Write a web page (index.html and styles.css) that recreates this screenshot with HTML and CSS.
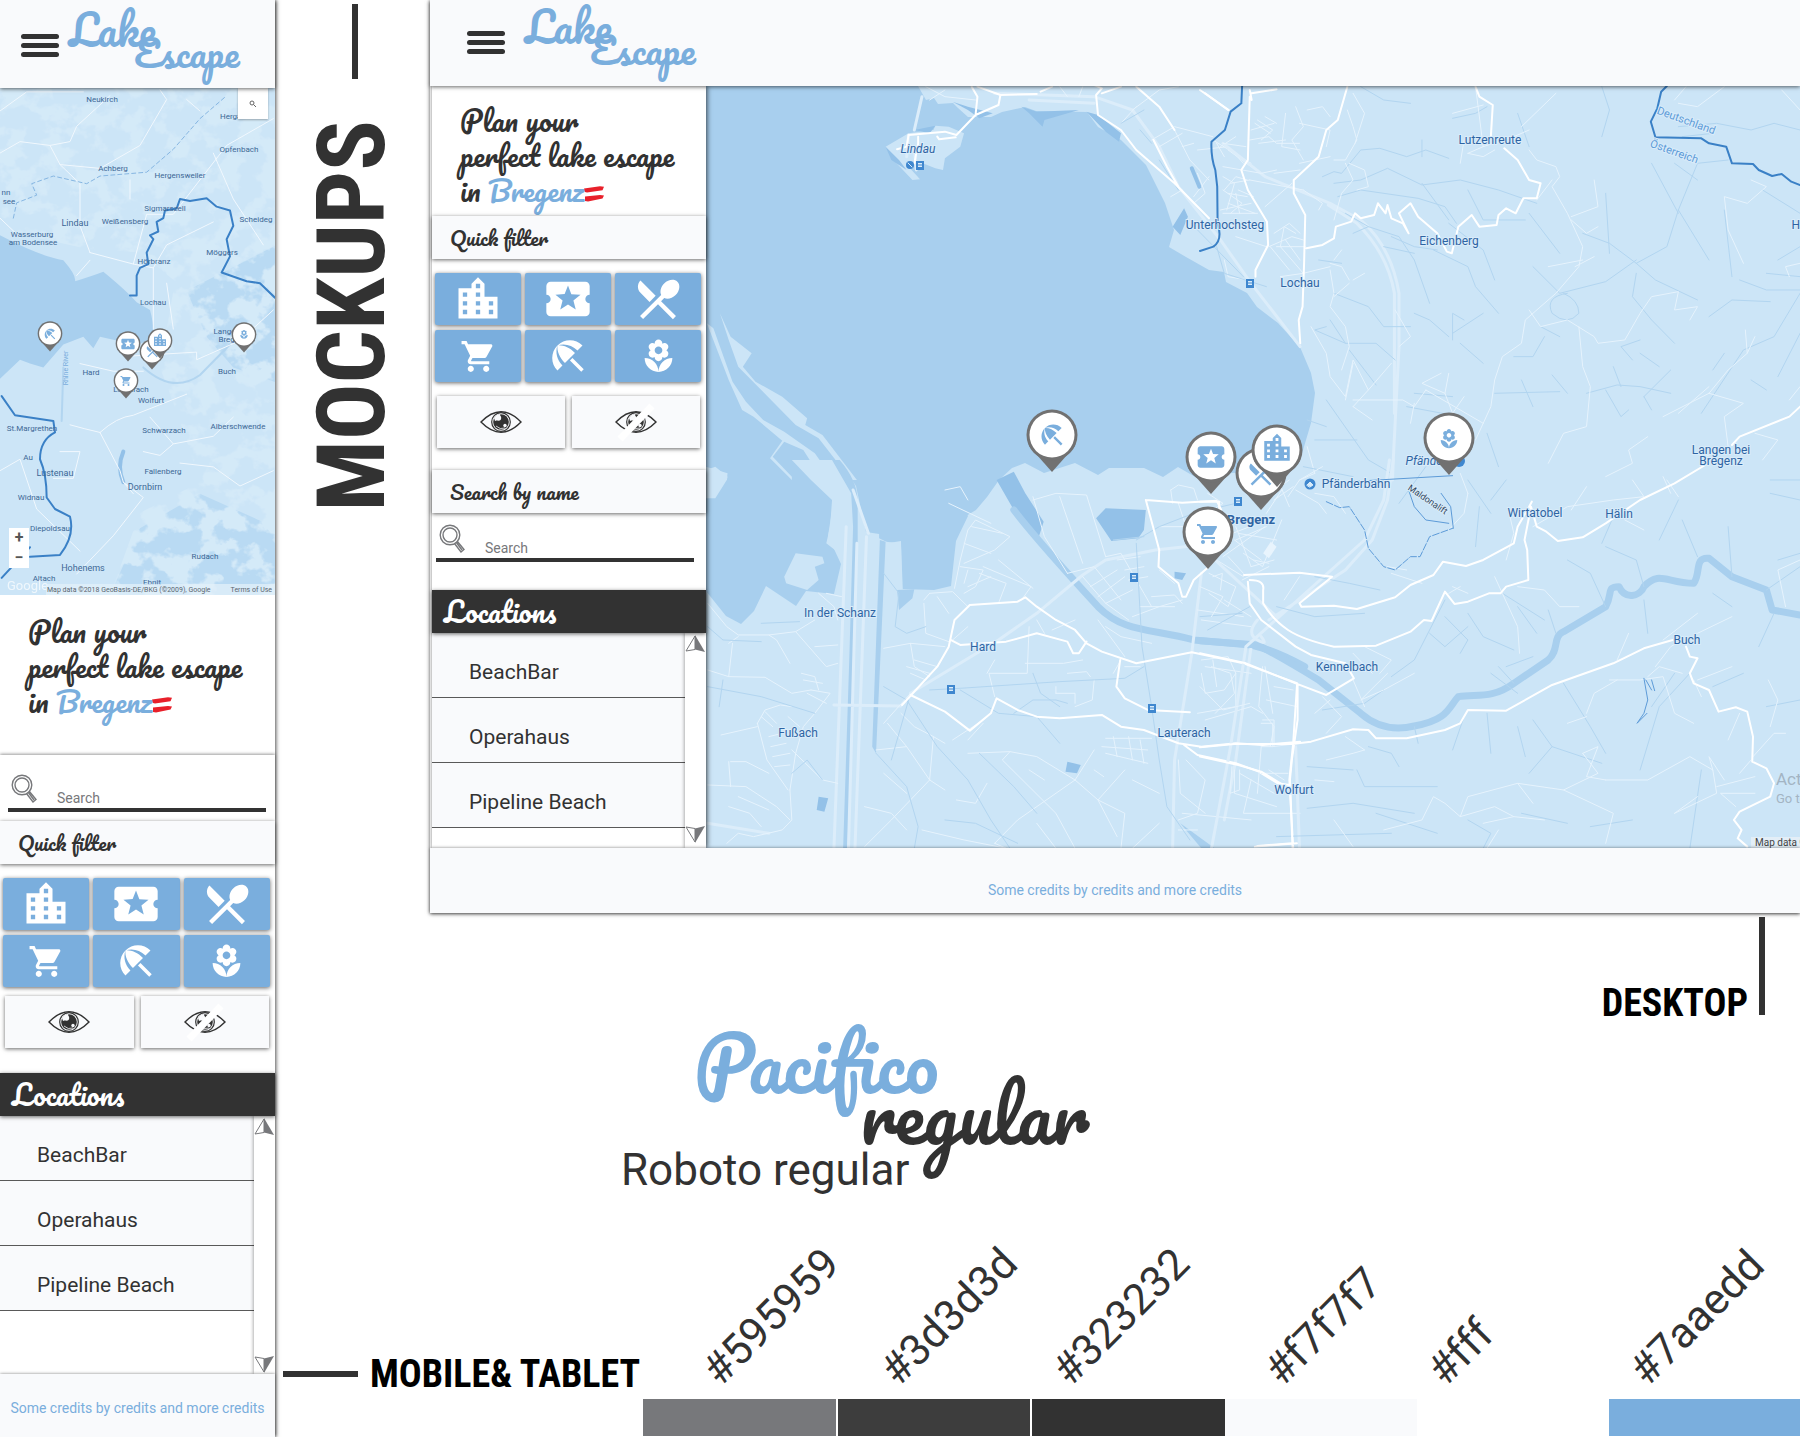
FILE: index.html
```html
<!DOCTYPE html>
<html lang="en">
<head>
<meta charset="utf-8">
<meta name="viewport" content="width=device-width, initial-scale=1">
<title>Lake Escape – Mockups</title>
<link rel="stylesheet" href="styles.css">
</head>
<body>
<svg class="sprite" aria-hidden="true">
  <symbol id="city" viewBox="0 0 24 24"><path d="M15 11V5l-3-3-3 3v2H3v14h18V11h-6zm-8 8H5v-2h2v2zm0-4H5v-2h2v2zm0-4H5V9h2v2zm6 8h-2v-2h2v2zm0-4h-2v-2h2v2zm0-4h-2V9h2v2zm0-4h-2V5h2v2zm6 12h-2v-2h2v2zm0-4h-2v-2h2v2z"/></symbol>
  <symbol id="ticket" viewBox="0 0 24 24"><path d="M20 12c0-1.1.9-2 2-2V6c0-1.1-.9-2-2-2H4c-1.1 0-1.99.9-1.99 2v4c1.1 0 1.99.9 1.99 2s-.89 2-2 2v4c0 1.1.9 2 2 2h16c1.1 0 2-.9 2-2v-4c-1.1 0-2-.9-2-2zm-4.42 4.8L12 14.5l-3.58 2.3 1.08-4.12-3.29-2.69 4.24-.25L12 5.8l1.54 3.95 4.24.25-3.29 2.69 1.09 4.11z"/></symbol>
  <symbol id="dining" viewBox="0 0 24 24"><path d="M8.1 13.34l2.83-2.83L3.91 3.5c-1.56 1.56-1.56 4.09 0 5.66l4.19 4.18zm6.78-1.81c1.53.71 3.68.21 5.27-1.38 1.91-1.91 2.28-4.65.81-6.12-1.46-1.46-4.2-1.1-6.12.81-1.59 1.59-2.09 3.74-1.38 5.27L3.7 19.87l1.41 1.41L12 14.41l6.88 6.88 1.41-1.41L13.41 13l1.47-1.47z"/></symbol>
  <symbol id="cart" viewBox="0 0 24 24"><path d="M7 18c-1.1 0-1.99.9-1.99 2S5.9 22 7 22s2-.9 2-2-.9-2-2-2zM1 2v2h2l3.6 7.59-1.35 2.45c-.16.28-.25.61-.25.96 0 1.1.9 2 2 2h12v-2H7.42c-.14 0-.25-.11-.25-.25l.03-.12.9-1.63h7.45c.75 0 1.41-.41 1.75-1.03l3.58-6.49c.08-.14.12-.31.12-.48 0-.55-.45-1-1-1H5.21l-.94-2H1zm16 16c-1.1 0-1.99.9-1.99 2s.89 2 1.99 2 2-.9 2-2-.9-2-2-2z"/></symbol>
  <symbol id="beach" viewBox="0 0 24 24"><path d="M13.127 14.56l1.43-1.43 6.44 6.443L19.57 21zm4.293-5.73l2.86-2.86c-3.95-3.95-10.35-3.96-14.3-.02 3.93-1.3 8.31-.25 11.44 2.88zM5.95 5.98c-3.94 3.95-3.93 10.35.02 14.3l2.86-2.86C5.7 14.29 4.65 9.91 5.95 5.98zm.02-.02l-.01.01c-.38 3.01 1.17 6.88 4.3 10.02l5.73-5.73c-3.13-3.13-7.01-4.68-10.02-4.3z"/></symbol>
  <symbol id="flower" viewBox="0 0 24 24"><path d="M12 22c4.97 0 9-4.03 9-9-4.97 0-9 4.03-9 9zM5.6 10.25c0 1.38 1.12 2.5 2.5 2.5.53 0 1.01-.16 1.42-.44l-.02.19c0 1.38 1.12 2.5 2.5 2.5s2.5-1.12 2.5-2.5l-.02-.19c.4.28.89.44 1.42.44 1.38 0 2.5-1.12 2.5-2.5 0-1-.59-1.85-1.43-2.25.84-.4 1.43-1.25 1.43-2.25 0-1.38-1.12-2.5-2.5-2.5-.53 0-1.01.16-1.42.44l.02-.19C14.5 2.12 13.38 1 12 1S9.5 2.12 9.5 3.5l.02.19c-.4-.28-.89-.44-1.42-.44-1.38 0-2.5 1.12-2.5 2.5 0 1 .59 1.85 1.43 2.25-.84.4-1.43 1.25-1.43 2.25zM12 5.5c1.38 0 2.5 1.12 2.5 2.5s-1.12 2.5-2.5 2.5S9.5 9.38 9.5 8s1.12-2.5 2.5-2.5zM3 13c0 4.97 4.03 9 9 9 0-4.97-4.03-9-9-9z"/></symbol>
  <symbol id="eye" viewBox="0 0 42 22">
    <path d="M1 11Q21-9.500 41 11Q21 31.500 1 11z" fill="none" stroke="#323232" stroke-width="1.400"/>
    <circle cx="21" cy="11" r="9.300" fill="none" stroke="#323232" stroke-width="1.200"/>
    <circle cx="21" cy="11" r="7.800" fill="#323232"/>
    <path d="M14 7a8 8 0 0 1 6-4c1 3-1 6-5 7z" fill="#f9fafc"/>
    <circle cx="18.500" cy="7" r="2.700" fill="#f9fafc"/><circle cx="25" cy="14.500" r="1.700" fill="#f9fafc"/>
    <path d="M16 15q4 4 9 2" fill="none" stroke="#f9fafc" stroke-width=".8"/>
  </symbol>
  <symbol id="lens" viewBox="0 0 26 29"><g fill="none" stroke="#77787b" stroke-width="1.400"><circle cx="11" cy="11" r="9.800"/><circle cx="11" cy="11" r="7"/><path d="M15.500 19.500l6.500 8.500 3-2.500-6.800-8.300M17 18l6 8"/></g></symbol>
  <symbol id="flag" viewBox="0 0 22 16"><path d="M0 2.500L16 .3l4 .5-1.500 3.500L3 6.500 1 6z M1 10.500L16 9l4 .5-1.500 3L4 15.500 1 15z" fill="#e8202a"/></symbol>
  <symbol id="arrow" viewBox="0 0 20 17"><path d="M10 1L1 16l9-1.500z" fill="#fff" stroke="#77787b"/><path d="M10 0L20 17l-10-2.500z" fill="#77787b"/></symbol>
  <symbol id="pin" viewBox="-26 -26 52 64"><path d="M-23 11L0 37L23 11z" fill="#717171"/><circle r="25.500" fill="#717171"/><circle r="22.500" fill="#fff"/></symbol>
  <symbol id="stop" viewBox="0 0 8 9"><path d="M0 0h8v9H0z" fill="#3f87cf"/><path d="M2 2h4v1.500H2zM2 4.500h4v1.500H2z" fill="#d9ecfa"/></symbol>
</svg>

<div class="board">
  <section class="phone" aria-label="Mobile and tablet mockup">
    <header class="top">
      <button class="burger" type="button" aria-label="Menu"><i></i><i></i><i></i></button>
      <a class="logo" href="#"><span>Lake</span><span class="logo-sub">Escape</span></a>
    </header>
    <div class="map">
      <svg class="map-art" viewBox="0 0 275 507" role="img" aria-label="Map around Bregenz">
        <defs>
          <filter id="hills" x="0" y="0" width="100%" height="100%">
            <feTurbulence type="fractalNoise" baseFrequency=".014 .018" numOctaves="4" seed="7"/>
            <feColorMatrix values="0 0 0 0 .66  0 0 0 0 .82  0 0 0 0 .94  9 0 0 0 -4.200"/>
            <feComposite in2="SourceGraphic" operator="in"/>
          </filter>
        </defs>
        <rect width="275" height="507" fill="#cce5f7"/>
        <g transform="translate(0 -88) scale(.3333 .3827)">
          <path d="M560 760L830 640V1000L700 960 620 880zM420 1380L600 1290 830 1380V1555H330z" fill="#b9daf3"/>
          <g filter="url(#hills)"><path d="M0 225H825V860L560 760 420 660 260 650 0 600z"/><path d="M520 760L830 620V1555H330L420 1340 600 1260 540 1100 480 960z"/></g>
          <path d="M0 615Q120 670 190 680Q230 720 225 735Q280 720 310 710Q380 760 410 790L450 810Q460 840 462 880L430 895 395 905 350 890 300 880 280 910 250 880 190 900 130 960 90 950 60 940 0 990z" class="water"/>
          <path d="M430 960Q520 1030 600 980L690 900M190 960L185 1100" class="stream wide"/>
          <path d="M370 1180Q350 1220 370 1260" class="stream wider"/>
          <path d="M0 400L60 370 150 380 210 370 230 330 330 250M150 380L180 430 240 480 240 590 270 660M180 430L300 440 420 380 500 260 480 235M390 470V520M270 660L400 690 440 560 520 560 680 380 820 310M270 680L230 720M400 690L460 700 500 640 640 580M460 700L460 860M500 740L520 860M350 900L400 930 590 920 590 940 720 890 820 810M240 950L340 970 430 970M300 1130Q350 1090 400 1085L560 1030M300 1130L360 1230 370 1260 400 1290M450 1090L520 1160 640 1140 700 1090M430 1180L480 1190 520 1160M540 1210L640 1220 720 1270 820 1230M180 1180L240 1180 220 1250 160 1250M0 570L60 620M0 1230L60 1200 110 1330 240 1440M370 1260L430 1300 340 1400 230 1500M0 290L80 240 250 240M560 260L600 290M640 400L700 520 790 640M210 1110Q250 1120 300 1130" class="road"/>
          <path d="M40 570L50 530 110 510 95 480 160 460 260 480 300 460 440 450 520 390 600 310 680 250" class="dash"/>
          <path d="M390 772H410V720L420 700 445 690 440 660 460 625 450 615 475 605 470 580 490 570 495 550 530 545 540 520 570 525 620 518 650 540 690 550 700 590 680 625 690 670 665 712 740 735 780 740 825 778M5 1035L45 1085 160 1100 165 1130Q120 1150 120 1200 140 1240 140 1300L165 1330 210 1350Q225 1400 180 1450L90 1455M5 1510L90 1430" class="border"/>
        </g>
        <g class="places">
          <text x="102" y="14">Neukirch</text><text x="239" y="64">Opfenbach</text><text x="113" y="83">Achberg</text><text x="180" y="90">Hergensweiler</text><text x="6" y="107">nn</text><text x="9" y="116">see</text><text x="165" y="123">Sigmarszell</text><text x="75" y="138" class="town">Lindau</text><text x="125" y="136">Weißensberg</text><text x="256" y="134">Scheideg</text><text x="32" y="149">Wasserburg</text><text x="33" y="157">am Bodensee</text><text x="222" y="167">Möggers</text><text x="154" y="176">Hörbranz</text><text x="153" y="217">Lochau</text><text x="233" y="246">Langen bei</text><text x="233" y="254">Bregenz</text><text x="91" y="287">Hard</text><text x="227" y="286">Buch</text><text x="131" y="304">Lauterach</text><text x="151" y="315">Wolfurt</text><text x="32" y="343">St.Margrethen</text><text x="164" y="345">Schwarzach</text><text x="238" y="341">Alberschwende</text><text x="28" y="372">Au</text><text x="55" y="388" class="town">Lustenau</text><text x="163" y="386">Fallenberg</text><text x="145" y="402" class="town">Dornbirn</text><text x="31" y="412">Widnau</text><text x="50" y="443">Diepoldsau</text><text x="205" y="471">Rudach</text><text x="83" y="483" class="town">Hohenems</text><text x="44" y="493">Altach</text><text x="152" y="497">Ebnit</text><text x="234" y="31">Hergatz</text>
          <text transform="translate(68 280) rotate(-90)" class="river">Rhine River</text>
        </g>
        <text x="7" y="502" class="google">Google</text>
        <rect x="46" y="496" width="229" height="11" fill="#e3f0fa" opacity=".75"/>
        <text x="47" y="504" class="legal">Map data ©2018 GeoBasis-DE/BKG (©2009), Google</text><text x="272" y="504" text-anchor="end" class="legal">Terms of Use</text>
        <g fill="#7aaedd">
          <use href="#pin" x="37" y="233" width="26" height="31"/><use href="#beach" x="43" y="239" width="14" height="14"/>
          <use href="#pin" x="139" y="251" width="26" height="31"/><use href="#dining" x="145" y="256" width="15" height="15"/>
          <use href="#pin" x="115" y="243" width="26" height="31"/><use href="#ticket" x="120" y="248" width="16" height="16"/>
          <use href="#pin" x="147" y="240" width="26" height="31"/><use href="#city" x="152" y="244" width="16" height="16"/>
          <use href="#pin" x="231" y="234" width="26" height="31"/><use href="#flower" x="239" y="241" width="10" height="11"/>
          <use href="#pin" x="113" y="280" width="26" height="31"/><use href="#cart" x="120" y="287" width="12" height="12"/>
        </g>
      </svg>
      <button class="map-find" type="button" aria-label="Search map"><svg viewBox="0 0 8 8" width="8" height="8"><circle cx="3" cy="3" r="2" fill="none" stroke="#666"/><path d="M4.500 4.500L7 7" stroke="#666"/></svg></button>
      <div class="zoom"><button type="button" aria-label="Zoom in">+</button><button type="button" aria-label="Zoom out">−</button></div>
    </div>
    <p class="slogan">Plan your<br>perfect lake escape<br>in <em>Bregenz</em><svg class="flag"><use href="#flag"/></svg></p>
    <div class="find"><label class="find-row"><svg class="lens"><use href="#lens"/></svg><input type="search" placeholder="Search" aria-label="Search"></label></div>
    <h2 class="bar">Quick filter</h2>
    <div class="filters">
      <button type="button" aria-label="Sights"><svg class="i-lg"><use href="#city"/></svg></button>
      <button type="button" aria-label="Events"><svg class="i-lg"><use href="#ticket"/></svg></button>
      <button type="button" aria-label="Restaurants"><svg class="i-lg"><use href="#dining"/></svg></button>
      <button type="button" aria-label="Shopping"><svg class="i-sm"><use href="#cart"/></svg></button>
      <button type="button" aria-label="Beaches"><svg class="i-md"><use href="#beach"/></svg></button>
      <button type="button" aria-label="Nature"><svg class="i-sm"><use href="#flower"/></svg></button>
    </div>
    <div class="views">
      <button type="button" aria-label="Show all"><svg class="eye"><use href="#eye"/></svg></button>
      <button type="button" aria-label="Hide all" class="hide"><svg class="eye"><use href="#eye"/></svg></button>
    </div>
    <h2 class="bar bar-dark">Locations</h2>
    <div class="places-box">
      <ul><li><a href="#">BeachBar</a></li><li><a href="#">Operahaus</a></li><li><a href="#">Pipeline Beach</a></li></ul>
      <div class="scroll"><button type="button" aria-label="Scroll up"><svg><use href="#arrow"/></svg></button><button type="button" aria-label="Scroll down" class="down"><svg><use href="#arrow"/></svg></button></div>
    </div>
    <footer class="credits">Some credits by credits and more credits</footer>
  </section>

  <div class="heading"><i class="rule-v"></i><h1>MOCKUPS</h1></div>

  <section class="desktop" aria-label="Desktop mockup">
    <header class="top">
      <button class="burger" type="button" aria-label="Menu"><i></i><i></i><i></i></button>
      <a class="logo" href="#"><span>Lake</span><span class="logo-sub">Escape</span></a>
    </header>
    <div class="split">
      <aside class="side">
        <p class="slogan">Plan your<br>perfect lake escape<br>in <em>Bregenz</em><svg class="flag"><use href="#flag"/></svg></p>
        <h2 class="bar">Quick filter</h2>
        <div class="filters">
          <button type="button" aria-label="Sights"><svg class="i-lg"><use href="#city"/></svg></button>
          <button type="button" aria-label="Events"><svg class="i-lg"><use href="#ticket"/></svg></button>
          <button type="button" aria-label="Restaurants"><svg class="i-lg"><use href="#dining"/></svg></button>
          <button type="button" aria-label="Shopping"><svg class="i-sm"><use href="#cart"/></svg></button>
          <button type="button" aria-label="Beaches"><svg class="i-md"><use href="#beach"/></svg></button>
          <button type="button" aria-label="Nature"><svg class="i-sm"><use href="#flower"/></svg></button>
        </div>
        <div class="views">
          <button type="button" aria-label="Show all"><svg class="eye"><use href="#eye"/></svg></button>
          <button type="button" aria-label="Hide all" class="hide"><svg class="eye"><use href="#eye"/></svg></button>
        </div>
        <h2 class="bar">Search by name</h2>
        <div class="find"><label class="find-row"><svg class="lens"><use href="#lens"/></svg><input type="search" placeholder="Search" aria-label="Search"></label></div>
        <h2 class="bar bar-dark">Locations</h2>
        <div class="places-box">
          <ul><li><a href="#">BeachBar</a></li><li><a href="#">Operahaus</a></li><li><a href="#">Pipeline Beach</a></li></ul>
          <div class="scroll"><button type="button" aria-label="Scroll up"><svg><use href="#arrow"/></svg></button><button type="button" aria-label="Scroll down" class="down"><svg><use href="#arrow"/></svg></button></div>
        </div>
      </aside>
      <div class="map">
        <svg class="map-art" viewBox="0 0 1094 762" role="img" aria-label="Map of Bregenz">
          <rect width="1094" height="762" fill="#cce5f7"/>
          <path class="water" d="M0 0H212L220 14 228 12 232 18 247 17 252 22 262 31 285 31 296 26 319 21 330 25 381 26 392 41 415 54 440 79 459 117 468 144 463 161 480 171 503 184 518 186 520 196 541 207 551 221 572 237 594 261 605 287 609 307 605 337 595 371 560 385 526 387 505 390 491 392 472 381 457 391 438 382 403 382 392 389 369 377 338 387 319 377 306 382 293 394 281 411 270 424 255 433 240 418 238 403 252 404 262 430 250 455 245 500 228 504 196 503 195 455 183 457 160 446 150 400 140 385 128 412 122 450 135 478 128 508 100 505 90 520 60 500 48 525 35 538 20 530 0 505z"/>
          <g transform="translate(-6 -6) scale(.3827 .3333)">
            <path class="land" d="M485 200L545 160 610 150 615 137 650 140 690 160 680 200 640 235 635 270 615 265 560 240 545 260 575 298 555 300 510 245z"/>
            <path class="land" d="M52 700L80 770 135 820 112 860 145 905 215 950 280 1015 275 1035 320 1065 410 1200H395L310 1075 250 1035 100 860 75 780z"/>
            <path class="land" d="M18 730L35 745 85 905 120 965 165 1020 220 1055 300 1120 350 1200 320 1200 270 1110 220 1085 190 1130 240 1190 240 1200 183 1135 215 1082 140 1010 110 990 75 900z"/>
            <path class="land" d="M16 1170L40 1160 72 1190 70 1200H16z"/>
            <path class="deep" d="M1010 95L1040 105 1100 160 1095 185 1060 155zM1265 385L1275 410 1255 465 1235 440zM840 80L880 95 990 90 900 120 895 140 860 100zM660 65L700 80 765 100 730 115 700 90zM485 200L520 240 540 270 500 240zM560 150L615 137 600 160z"/>
          </g>
          <g transform="translate(-6 374) scale(.3827 .3333)">
            <path class="land" d="M240 0H360L400 80 405 250 395 600 375 1165H340L370 560 375 290 330 250 340 200 345 120 290 60zM16 20L72 40 70 60 40 115 16 115z"/>
            <path class="land" d="M220 350L250 280 320 290 325 310 300 320 310 360 280 390 225 370z"/>
            <path class="land" d="M430 215L468 222 465 1165H400zM485 245L525 250 530 390 515 400 480 420 470 600 490 300z"/>
            <path class="water" d="M365 0Q410 60 412 120L412 250 400 700 385 1165H374L390 600 400 200 395 100 345 0zM470 240L485 245 475 500 460 880 450 860z"/>
            <path class="water" d="M515 390L560 388 555 415 520 450zM1255 1090L1345 1165H1310z"/>
            <path class="deep" d="M775 60L820 35 850 100 898 185 885 232 850 190 820 150zM1035 175L1060 145 1165 150 1160 210 1145 235 1075 243zM960 905L995 915 985 940 955 935zM310 1010L335 1015 325 1055 305 1050zM1240 335L1270 340 1260 360 1240 355z"/>
            <path class="stream river-w" d="M820 150C880 240 960 340 1040 440C1110 520 1180 505 1290 540L1440 555Q1500 570 1580 620"/>
            <path class="minor2" d="M400 90L440 220M382 200L350 1165M410 250L388 1165M435 230L405 1165M780 540L880 460 1000 345 1060 300 1190 270 1350 250M550 700L780 540M525 738L350 735M1310 340L1285 580 1240 900 1235 1165M20 1090L180 1120M1440 560L1400 900 1370 1080"/>
            <path class="minor" d="M20 430L70 500 100 525 180 525 250 515 300 480M180 525L200 540 235 610M250 515L330 620 360 610M85 550L75 650 20 630M75 650L170 652 240 700 290 690M75 550L100 530M300 560L360 555M290 690L340 700 300 760 270 800 250 880 235 990M240 870L320 960 360 970M150 790L175 900 230 990M150 790L170 750 210 735 240 740M160 770L190 800M170 755L200 790M180 830L215 820M185 860L225 850M190 890L235 880M195 920L235 915M80 905H120L180 940M75 905L80 980M20 975L120 980 200 1040 235 1080M235 990L240 1080 215 1110 140 1130 100 1120 70 1150M75 1040L130 1060 160 1100M100 1010L180 1050M55 825L150 800M265 640L300 650 310 690M270 660L320 670M280 700L330 730M230 770L260 800M310 400L350 440 360 480M320 440L350 470M330 400L370 410"/>
            <path class="minor" d="M480 565L550 550 640 560M550 550L560 620 600 650M540 620L600 640M560 600L620 620M550 640L590 660M480 790L550 700M490 790L540 860 600 960 640 990M525 760L560 800 610 830 640 850M610 830L600 960M600 960L500 1080 430 1160M460 870L540 860M540 1000L480 940M660 840L740 780M700 880L810 875 880 890 980 960M810 875L790 900 930 1060 980 1165M980 960L1040 1020 1110 930M980 960L1030 870M980 960L830 1080 770 1150M1040 1020L1090 1130M740 790L700 840M670 1020L720 1030 750 970M860 930L900 960M1030 930L1055 950M580 1110L690 1140 800 1165M430 1040L500 1060 540 1110M860 500L855 640 755 640 770 710M850 610H950L1000 600M930 700H980V730M930 680V700M1030 660L1025 720 980 740M960 640L1010 635 1020 650M770 600L750 640M700 500L660 540M880 480L900 520M920 510L980 480M1060 500L1100 530 1180 550M1040 480L1110 590M1080 640L1100 600M1110 620H1150"/>
            <path class="minor" d="M665 385L680 300 700 210 720 180 810 230 770 270 690 310M690 250L760 280M710 200L790 220M680 320L740 330 720 380 690 400M700 330L690 370M730 340L800 370 780 430M740 320L865 380 840 420M700 380L760 350M780 300L870 385M600 400L660 395 700 440M585 420L600 400M585 430L590 520 650 545M620 410L650 460M640 90L680 80 700 120M650 130L760 190M870 110L900 230 960 340M870 120L930 100 1010 105 1060 290M940 110L1000 310M1060 290L1100 280 1160 400 1180 440M1000 350L1060 430 1120 480M960 340L1030 320 1100 420M1020 380L1090 330M1040 410L1110 350M1060 430L1130 390M1090 300L1150 290M1110 330L1160 320M1120 360L1170 350M1130 470L1200 440 1260 420M1180 410L1240 405 1260 430M1150 440L1240 440M1200 330L1240 370M1230 90L1250 75 1290 85 1300 120M1230 90L1235 130M1250 130L1270 200 1330 180M1200 200L1270 200 1290 240M1330 340L1400 380 1380 440 1330 400M1340 350L1365 340 1360 390M1370 420L1440 470M1300 450L1420 470M1310 480L1440 500M1400 200L1440 320M1400 240L1480 200M1420 280L1470 320 1520 180M1440 320L1500 300M1380 290L1420 340M1350 300L1420 350M1490 100L1540 60M1500 120L1550 80M1510 60L1540 140M1480 160L1520 90"/>
            <path class="minor" d="M1310 600L1380 590 1400 640 1370 690 1320 700 1310 640M1340 600L1350 680M1400 640L1400 740 1300 760M1320 780L1440 740 1470 760M1320 620L1440 640M1470 620L1460 740 1500 800 1490 860M1500 680L1550 690M1480 720L1560 740M1470 780H1500V860M1060 835H1180M1050 860L1170 870M1060 880L1170 910M1080 830L1090 890M1120 830L1130 900M1150 840L1160 910M1250 900L1255 1000 1320 1060M1270 900L1320 960 1300 1060 1250 1080M1390 920L1385 1000 1410 990V930M1410 940L1500 1000M1440 960L1420 1060 1568 1060M1260 1060L1440 1080M1130 960L1200 1000M1040 1020L1110 1060 1100 1165M770 1150L800 1165M880 1090L930 1165M1200 1090L1130 1165M1250 1110H1300"/>
            <path class="stream" d="M480 680L540 720 620 860 700 960 760 1080 810 1165M600 690L680 685 940 665 1110 655 1160 620M545 720L500 900M680 690L780 760 880 770 940 850M820 760L870 720 930 720 960 730M870 640L890 700 940 740M730 880L820 980 880 1060M1140 250L1155 560 1180 740 1200 900 1220 1040 1280 1140M1140 240L1200 200 1290 160 1400 130M460 880L540 980 570 1100 560 1165M20 680L160 710 300 760M60 660L50 740M20 500L60 540 160 545M160 490L260 485M480 340L520 400 510 500 540 520 590 500M640 1080L720 1090 830 1150M1080 240L1160 230M320 960L280 900 240 940"/>
            <path class="road main" d="M528 735L620 620 650 560 665 480 705 435 830 425 850 412 880 440 930 480 980 510 1010 550 1050 575 1140 610 1285 577 1420 610 1560 670M655 540L680 555 800 545 880 520 960 545 975 580 990 580 1010 545M550 705L640 755 705 812 760 760 775 715 830 750 880 770 940 775 1050 765 1100 800 1160 810 1250 850 1310 860 1400 850 1470 855 1568 845M1098 600L1088 680 1110 715 1170 750 1280 757M1265 855L1300 885 1400 910 1460 935 1510 970 1540 975M1560 675L1550 850 1540 960 1550 1165M1560 1150L1450 1160M1165 120L1200 270 1198 320 1250 370 1260 410 1270 410 1290 360 1325 325M1165 120L1260 128 1350 122 1362 150"/>
          </g>
          <g transform="translate(-6 -6) scale(.3827 .3333)">
            <path class="minor2" d="M1030 50L1130 90 1200 200 1250 320 1360 480 1440 610 1568 800M770 40L1030 50M860 60L1030 70"/>
            <path class="minor" d="M590 20L640 50 720 60M640 30L600 60M940 20L960 50M1000 20L990 50M1100 130L1140 80M1130 90L1200 30 1250 20M1180 180L1240 140 1340 170M1200 200L1260 160M1240 150L1280 240 1330 300M1260 200L1290 190M1300 210L1380 200 1420 250M1340 180L1440 250M1360 200L1400 170M1380 210L1440 260M1370 230L1350 190M1230 350L1260 330M1290 350L1330 290M1300 280L1320 340 1290 370M1360 390L1440 370M1370 330L1400 290 1430 300M1380 340L1430 350M1380 370L1450 400M1400 340L1410 400M1370 430L1420 450M1400 470L1480 500M1370 540L1380 590 1430 600M1440 150L1500 130M1450 130L1490 160M1460 190L1530 180M1530 100L1520 200 1568 210M1500 280L1568 270M1500 460L1540 430 1568 460M1530 480L1568 540M1490 500L1540 570"/>
            <path class="minor2" d="M580 50L560 150M545 165L540 230M560 200L565 270"/>
            <path class="stream" d="M1100 130L1160 90M1180 190L1150 150M1350 500L1370 580 1480 620M1300 450L1420 590M1250 330L1200 240"/>
            <path class="stream wider" d="M1285 265L1305 320"/>
            <path class="road main" d="M545 165L640 155 670 165 720 105 780 75 785 45 880 42M620 170L625 178 668 172M545 165L540 200 515 208M570 170V190L560 250M710 20L725 50 720 105M725 20L785 45M1030 15L1050 25 1035 45 1040 105 1100 150 1140 210 1240 310 1330 415M1185 180L1220 260 1250 320M1050 40L1100 20M1140 20L1200 80 1240 150M1320 40L1380 90M890 35L920 20"/>
          </g>
          <g transform="translate(494 -6) scale(.3827 .3333)">
            <path class="minor2" d="M60 190L170 290 340 370 420 420Q500 500 520 640L520 800 505 1140 503 1200M335 375L410 430Q490 520 508 640L508 1000"/>
            <path class="stream" d="M320 290L350 275 370 280 420 210 470 205 540 230 590 210 650 235M350 310L420 300 490 265 580 315 680 300 780 330 880 370M580 180V230M360 350L420 330 570 355 640 380 670 430M650 420L580 310M700 330L740 420 850 420M860 400L940 520M400 460L440 440 520 470 560 540 600 670M420 20L480 60 550 70M440 440L380 400M660 115L720 100 750 80M610 510L700 560 720 620 780 700M500 470L560 500 620 510M650 430L740 510 770 600M660 780V700L690 720M650 770L600 720 560 700M740 850L680 790M660 760L740 700M350 640L440 680 480 740 550 740M330 740L300 750 380 790 460 790 510 840M390 810L460 915M380 790L340 720M310 540L370 550M870 560L940 640 1060 605 1140 540M1140 550L1070 490 1000 460M1140 550L1190 600 1300 660M1140 550L1220 500 1250 390 1300 250 1380 240M1250 400L1180 250M1250 390L1330 540M1140 580L1130 650 1180 720 1240 790M1300 300L1240 250M1370 390L1390 590M1060 340L1070 520M1050 20L1070 90 1050 170M1250 140L1350 130 1440 150 1500 130 1568 150M1260 170L1340 160M1470 330L1568 400M1410 600L1480 630H1568M1330 710L1390 660 1490 665M1568 500L1510 540M1568 590L1480 580M1568 640L1500 770 1420 810 1310 1000M1150 780L1100 800 1130 840M1150 820L1200 860M960 640Q900 650 920 700 960 740 990 700 990 660 950 640M890 740L940 770M820 830L870 830 900 770M770 940L940 935M840 900L870 980M920 885L960 940M1010 940L1090 915 1150 920 1230 940M1160 950L1180 990M1060 930L1100 1010 1120 990M1160 950L1230 870M1100 920L1080 860M300 1080L410 1080M330 1040L280 1020M540 980L680 1010M560 940L660 950M330 960L440 1140 500 1180M750 1060L780 1160M1370 820L1340 870M1440 900L1480 930M1510 890L1568 760M560 520L480 500M830 100L860 200"/>
            <path class="minor" d="M250 80L270 140 240 180 270 240M260 130L340 150 330 200M280 90L320 80 340 110M385 90L400 140 410 180 380 240 350 240M400 40L430 100 405 190M390 250L430 270 440 320 410 330M380 250L400 300 370 340 350 420M130 180L180 170 200 190 260 190M150 120L190 150 160 180M170 110L200 130M120 200L60 190M60 260L160 280 200 270M60 330L110 370 80 400M100 330L140 350M80 310L130 300M60 290L90 310 70 390M60 400L150 400M130 300L270 330M170 380L240 310M260 250L340 230M210 500L270 580M180 500L240 470 270 480M210 500L220 440 250 460M200 500L275 500M210 590L270 580 340 560M340 550L370 560 390 600M350 540L370 510M400 600L430 580M340 570L350 640 340 680 380 740 390 800 370 870M390 610L350 650M290 740L330 820 340 890 380 950 400 840 440 930 400 980M440 930L500 850M400 850L380 960M270 330L320 370 310 390M400 960L530 960 560 980 590 930M650 880L640 940 580 910 630 880M640 940L660 1000 690 950M590 930L740 1030M560 970L550 1030M510 690L550 770 520 800M400 980L450 1020M720 20L740 200 700 220M690 180L680 250M700 220L740 230 770 210M860 150L820 170 740 200M660 100L740 75M860 210L880 240 930 260 940 290 920 320 960 400 1000 500 990 560 930 640 850 720 840 790 790 830 770 900 760 980 720 1080M880 360L920 300M970 410L1040 380 1030 300M970 420L1010 460 1040 440M1000 540L910 560M1030 530L980 560M860 690L890 740 960 720 1030 770 1040 790 1110 780 1150 700 1180 650 1250 635 1240 690 1300 680 1280 720M990 740L1000 860 1020 920 1010 1040 950 1060 910 1150M1420 550L1380 450 1370 350 1430 370 1480 320 1440 300M1250 70L1300 80 1370 20M1240 60L1270 20M1520 30L1568 90M1540 590L1530 560 1568 550M1425 750L1430 820 1380 870 1330 940 1210 1010M1450 770L1430 820M1330 940L1420 970 1370 1010 1380 1100 1320 1130M1330 920L1250 1000M1568 920L1540 960M1450 1060L1510 1080 1470 1140M280 1100L300 1180M930 40L840 140M1170 1070L1120 1110 1130 1150 1060 1190"/>
            <path class="road main" d="M0 30L75 90M135 40L200 28M130 50L125 240 108 270 125 330 175 425 178 495 145 570V590M130 30L135 60M385 20L360 120 330 150 310 230 245 300 245 340 275 405 272 550 268 680 258 720 262 790M278 505L320 495 350 475 355 440 395 425 405 400 420 415 455 405 465 370 485 400 490 375 500 415 530 430 545 460 520 400 550 370 570 410 620 460 645 515 658 520 675 440 710 405 730 440 775 435 780 405 800 385 825 400 845 355 880 355 890 310 860 300 830 240 795 205M720 20L730 50 765 75 760 170M1568 980L1540 1010 1410 1070 1390 1095"/>
            <path class="border" d="M110 18L108 70 80 95 65 150 30 185Q28 230 40 270L45 320 46 430Q60 480 35 500L0 513M1220 18L1205 35 1195 85 1178 125 1190 172 1310 175 1330 190 1375 200 1390 250 1445 252 1460 270 1495 288 1520 282 1545 305 1568 315"/>
          </g>
          <g transform="translate(494 374) scale(.3827 .3333)">
            <path class="stream river-w" d="M0 542L150 555Q210 590 310 660L420 760Q480 820 560 798C650 780 650 740 675 710 720 700 760 720 820 670L910 600C940 570 920 530 950 515L1060 440C1080 400 1060 380 1095 380 1110 420 1150 410 1160 380 1200 330 1220 370 1290 370 1310 340 1290 290 1330 295L1390 350 1480 390 1495 450 1568 465"/>
            <path class="minor2" d="M505 0L490 120 450 240 380 330 180 480M495 0L480 120 430 240 120 560M30 290L200 470M150 480Q120 520 150 540 180 560 160 530M120 560L80 860 30 1165M250 860L260 1165"/>
            <path class="stream" d="M270 20L400 50M520 130L590 20M300 350L390 370 470 390M200 440L300 470 430 460M640 420L560 600 500 650M600 520L640 560 700 500M640 470L700 540 680 580M700 460L740 530 820 570M790 400L900 480M830 440L880 520M930 520L910 450M870 590L800 620M820 670L780 620M1060 440L1020 340 960 300M1160 380L1140 300 1060 260M1080 170L1050 250M1250 120L1200 240M1300 290L1260 180M1390 350L1380 200M1480 390L1568 320M1160 420L1170 520M1500 460L1460 560M1390 440L1340 400M690 770L660 870M750 760L760 880M870 780L920 860 860 940M920 860L1050 910M830 700L760 640M950 670L1020 800 1060 880M1280 640L1200 740 1150 930M1240 640L1180 740M560 800L570 850M440 860L500 880 520 920M410 930L430 980 620 980M280 920L400 930M280 1045L400 1030 560 1060M460 1060L620 1120M200 1130L500 1120M320 750L430 730 480 690M830 800L850 890M1310 930L1280 1165M1340 680L1420 640M1490 60H1568M1490 100L1568 120M1510 300L1568 280M700 1080L760 1120 740 1165M1480 740L1568 720M1020 1100L1130 1080M840 1060L960 1090M20 510L130 440M0 470L110 460M700 60L760 160M730 140L720 260M760 120L800 60"/>
            <path class="minor" d="M230 110L260 60 300 40M260 60L320 20M300 100L350 110 380 160M250 90L310 130 330 160M700 100L680 40M700 100L690 160 650 210M800 300L820 220 810 170M500 340L580 370M490 320L540 330M220 420L260 350M20 100L60 130 20 160M40 240L130 200M60 290L170 200M90 240L160 300M100 220L200 240M140 300L180 310M110 360L180 320M0 380L60 410 30 470M770 350L790 400 830 500 835 580M830 380L900 390 940 440 990 440M660 380L700 400M650 400L680 380M490 640L420 720 480 690 560 640M430 560L500 600 470 640M400 580L450 640M400 660L430 740M320 710L370 770 330 820M300 760L340 720M160 790H190V860H160M170 620L190 760M30 620L80 640 90 700 40 760M0 680L60 750 130 730M160 860L150 1000M190 860L260 850M90 930V1000L200 1040M180 930L220 960M160 940H230M300 960L350 965M330 900L400 880 430 870M380 830L430 870M350 1080L400 1160M480 1110L580 1080 610 1010 640 1030 680 1070 770 1040 820 1070 900 1080M680 1070L700 1010 830 970 950 990 1040 940 1000 880M830 970L870 1030M1000 880L1040 860 1010 950 1060 960M950 990L1080 1060 1060 1150M1060 960L1170 960 1280 890 1340 930 1350 1000 1240 1060M1340 930L1330 890 1370 960M1350 980L1450 950M1400 1040L1360 1000 1450 1000M1240 1060L1300 1010M1440 900L1410 940M1445 890L1500 820 1530 820M1485 660L1510 720 1490 800M1380 840L1410 760M1170 650L1200 620 1260 640M1190 620L1230 560 1260 540M1070 660L1150 660 1210 650 1240 760 1290 790M1010 760L1030 700 1090 660M960 790L1010 770M1290 660L1310 710M1300 660L1390 620M1300 520L1390 470M1210 540L1300 460M1090 600L1120 520M870 200L960 140 1080 120 1160 110 1130 60M1110 180L1160 210M1230 100L1210 50M970 150L1010 80M1220 60L1250 110M1568 300L1510 330 1530 440M780 1110L750 1165M740 1090L820 1070"/>
            <path class="road main" d="M115 345L260 338 345 350 260 430 265 440 350 437 410 447 510 412 550 375 610 345 635 305 695 318 740 300 820 250 830 200 860 140 867 125M130 360Q170 360 165 390L165 430Q190 480 230 510 270 540 350 560L460 557 550 515 585 480 605 483 640 395 665 432 700 425 755 400 785 400 800 380 858 360 855 270 848 240 865 140 880 200 905 215 935 243 1000 232 1060 190 1150 120 1240 70 1320 15M125 365L130 430 160 480 250 560 290 585 380 610 402 655 330 705 250 670 120 610 0 580M255 675L255 780 240 900 235 960 242 1165M0 862L90 852 240 852 290 845 400 808 440 810 460 835 540 835 640 810 680 790 700 750 800 752 920 675 1080 610 1160 565 1235 540M1270 560L1280 590 1300 595 1280 640 1290 670 1330 690 1355 755 1400 742 1430 755 1445 830 1443 905 1480 925 1500 970 1490 1010 1410 1055 1395 1080 1415 1110 1405 1135 1430 1160M0 890L100 915 160 935 210 970M150 1158L240 1150M0 125H50V150M1390 1095"/>
            <path class="blob" d="M165 280L185 245 200 260 180 295z"/>
            <path class="lift" d="M390 65L660 47M545 90L560 140 590 180 650 190M630 100L655 140 662 205M1160 655L1170 720 1160 760 1142 790 1168 760M1165 660L1180 690M1180 660L1188 692"/>
            <path class="lift dashes" d="M330 125L365 143 390 140 430 210 440 265 480 320 510 330 550 290 575 290 600 230 660 205"/>
          </g>
          <g fill="#3f87cf"><circle cx="604" cy="398" r="5.500"/><circle cx="204" cy="79" r="4"/><circle cx="753" cy="375" r="6"/></g>
          <path d="M601 399l3-3 3 3-3 2z M202 77l4 4" fill="#d9ecfa" stroke="#d9ecfa"/>
          <use href="#stop" x="210" y="75" width="8" height="9"/><use href="#stop" x="540" y="193" width="8" height="9"/><use href="#stop" x="528" y="411" width="8" height="9"/><use href="#stop" x="424" y="487" width="8" height="9"/><use href="#stop" x="241" y="599" width="8" height="9"/><use href="#stop" x="442" y="618" width="8" height="9"/>
          <g class="names">
            <text x="212" y="67" class="it">Lindau</text><text x="519" y="143">Unterhochsteg</text><text x="594" y="201">Lochau</text><text x="784" y="58">Lutzenreute</text><text x="743" y="159">Eichenberg</text><text x="1015" y="368">Langen bei</text><text x="1015" y="379">Bregenz</text><text x="1110" y="143">Hörbranz</text><text x="720" y="379" class="it">Pfänder</text><text x="650" y="402">Pfänderbahn</text><text x="829" y="431">Wirtatobel</text><text x="913" y="432">Hälin</text><text x="981" y="558">Buch</text><text x="641" y="585">Kennelbach</text><text x="588" y="708">Wolfurt</text><text x="478" y="651">Lauterach</text><text x="277" y="565">Hard</text><text x="134" y="531">In der Schanz</text><text x="92" y="651">Fußach</text><text x="545" y="438" class="capital">Bregenz</text>
            <text transform="translate(979 38) rotate(20)" class="land-name">Deutschland</text><text transform="translate(967 69) rotate(20)" class="land-name">Österreich</text><text transform="translate(720 416) rotate(34)" class="lift-name">Maldonalift</text>
          </g>
          <text x="1070" y="699" class="ghost">Activate Windows</text><text x="1070" y="717" class="ghost sm">Go to Settings</text>
          <rect x="1045" y="751" width="49" height="11" fill="#e3eef7"/><text x="1049" y="760" class="legal-d">Map data ©2018</text>
          <g fill="#7aaedd">
            <use href="#pin" x="320" y="323" width="52" height="64"/><use href="#beach" x="332" y="335" width="28" height="28"/>
            <use href="#pin" x="529" y="361" width="52" height="64"/><use href="#dining" x="540" y="373" width="30" height="30"/>
            <use href="#pin" x="479" y="345" width="52" height="64"/><use href="#ticket" x="489" y="355" width="32" height="32"/>
            <use href="#pin" x="545" y="338" width="52" height="64"/><use href="#city" x="554" y="345" width="34" height="34"/>
            <use href="#pin" x="717" y="326" width="52" height="64"/><use href="#flower" x="732" y="342" width="22" height="22"/>
            <use href="#pin" x="476" y="420" width="52" height="64"/><use href="#cart" x="490" y="436" width="24" height="24"/>
          </g>
        </svg>
      </div>
    </div>
    <footer class="credits">Some credits by credits and more credits</footer>
  </section>

  <section class="guide" aria-label="Style guide">
    <div class="tag tag-desktop"><span>DESKTOP</span><i class="rule-v"></i></div>
    <div class="fonts">
      <p class="script script-blue">Pacifico</p>
      <p class="script script-dark">regular</p>
      <p class="plain">Roboto regular</p>
    </div>
    <div class="bottom">
      <div class="tag tag-mobile"><i class="rule-h"></i><span>MOBILE&amp; TABLET</span></div>
      <div class="palette">
        <div class="codes"><span>#595959</span><span>#3d3d3d</span><span>#323232</span><span>#f7f7f7</span><span>#fff</span><span>#7aaedd</span></div>
        <div class="swatches"><i class="c1"></i><i class="c2"></i><i class="c3"></i><i class="c4"></i><i class="c5"></i><i class="c6"></i></div>
      </div>
    </div>
  </section>
</div>
</body>
</html>
```
FILE: styles.css
```css
* { box-sizing: border-box; }
body { margin: 0; background: #fff; color: #323232; font-family: Roboto, sans-serif; overflow-x: hidden; }
h1, h2, p, ul { margin: 0; padding: 0; }
ul { list-style: none; }
a { color: inherit; text-decoration: none; }
button { border: 0; padding: 0; background: none; font: inherit; color: inherit; cursor: pointer; }
svg { display: block; }
.sprite { position: absolute; width: 0; height: 0; }

.board { display: grid; grid-template-columns: 275px 155px 1fr; grid-template-rows: auto 1fr; min-height: 100vh; }
.phone { grid-row: 1 / 3; display: flex; flex-direction: column; box-shadow: 1px 0 4px rgba(0, 0, 0, .7); }
.desktop { min-width: 0; box-shadow: 0 1px 4px rgba(0, 0, 0, .6); }
.guide { grid-column: 2 / 4; display: flex; flex-direction: column; min-width: 0; }

/* header */
.top { position: relative; z-index: 2; display: flex; background: #f9fafc; box-shadow: 0 1px 4px rgba(0, 0, 0, .6); }
.phone .top { height: 88px; padding: 7px 21px; gap: 10px; }
.desktop .top { height: 86px; padding: 4px 37px; gap: 20px; }
.burger { display: flex; flex-direction: column; gap: 4px; width: 38px; padding-top: 27px; }
.burger i { height: 5px; border-radius: 3px; background: #323232; }
.logo { display: block; font: 400 42px/44px Pacifico, Lato, cursive; color: #7aaedd; }
.logo span { display: block; }
.logo .logo-sub { font-size: 37px; line-height: 32px; margin: -14px 0 0 65px; }

/* shared script text */
.slogan, .bar, .script { font-family: Pacifico, Lato, cursive; font-weight: 400; }
.slogan { padding: 19px 0 36px 28px; font-size: 28px; line-height: 35px; white-space: nowrap; background: #fff; }
.slogan em { color: #7aaedd; font-style: normal; }
.desktop .slogan { padding: 17px 0 8px 28px; }
.flag { display: inline-block; width: 22px; height: 16px; }

.bar { position: relative; z-index: 1; padding: 0 18px; font-size: 20px; line-height: 43px; background: #f9fafc; box-shadow: 0 1px 4px rgba(0, 0, 0, .6); }
.bar-dark { padding: 0 12px; font-size: 28px; background: #323232; color: #fff; }

.find { background: #fff; }
.phone .find { padding: 17px 9px 9px 8px; box-shadow: 0 -1px 3px rgba(0, 0, 0, .4); }
.desktop .find { padding: 9px 12px 28px 4px; }
.find-row { display: flex; border-bottom: 4px solid #323232; height: 40px; padding-left: 3px; gap: 20px; }
.lens { flex: none; width: 26px; height: 29px; margin-top: 2px; }
.find input { flex: 1; min-width: 0; border: 0; outline: 0; padding: 15px 0 0; background: none; font: 14px Roboto, sans-serif; color: #323232; }
.find input::placeholder { color: #77787b; opacity: 1; }

.filters { display: grid; grid-template-columns: repeat(3, 1fr); gap: 5px 4px; padding: 14px 5px 9px 3px; background: #fff; }
.desktop .filters { padding-bottom: 14px; }
.filters button { display: grid; place-items: center; height: 52px; border-radius: 2px; background: #7aaedd; fill: #fff; box-shadow: 0 1px 4px rgba(0, 0, 0, .6); }
.i-lg { width: 52px; height: 52px; }
.i-md { width: 42px; height: 42px; }
.i-sm { width: 37px; height: 37px; }

.views { display: grid; grid-template-columns: 1fr 1fr; gap: 7px; padding: 0 6px 25px 5px; background: #fff; }
.desktop .views { padding-bottom: 22px; }
.views button { position: relative; display: grid; place-items: center; height: 52px; background: #f9fafc; box-shadow: 0 1px 4px rgba(0, 0, 0, .6); }
.eye { width: 42px; height: 22px; }
.hide::after { content: ""; position: absolute; width: 46px; height: 7px; background: #fff; transform: rotate(-46deg); }

.places-box { flex: 1; display: flex; background: #fff; }
.places-box ul { flex: 1; }
.places-box li { background: #f9fafc; border-bottom: 1px solid #595959; }
.places-box a { display: block; padding: 14px 0 0 37px; font-size: 21px; line-height: 50px; }
.scroll { width: 21px; display: flex; flex-direction: column; justify-content: space-between; padding: 2px 0 1px; box-shadow: -1px 0 3px rgba(0, 0, 0, .3); }
.scroll svg { width: 20px; height: 17px; }
.scroll .down { transform: scaleY(-1); }
.desktop .scroll { padding-bottom: 5px; }

.credits { position: relative; z-index: 1; display: grid; place-items: center; height: 63px; padding-top: 4px; background: #f9fafc; color: #7aaedd; font-size: 14px; box-shadow: 0 0 3px rgba(0, 0, 0, .5); white-space: nowrap; }
.desktop .credits { height: 65px; padding-top: 19px; }

/* desktop body */
.split { display: flex; margin-left: 2px; }
.side { position: relative; z-index: 1; flex: none; width: 274px; display: flex; flex-direction: column; box-shadow: 1px 0 5px rgba(0, 0, 0, .7); }
.split .map { flex: 1; min-width: 0; }

/* maps */
.map { position: relative; }
.map-art { width: 100%; height: auto; overflow: hidden; }
.map-art path { vector-effect: non-scaling-stroke; stroke-linejoin: round; stroke-linecap: round; }
.water { fill: #a8cfee; }
.deep { fill: #93c1e8; }
.land { fill: #cce5f7; }
.blob { fill: #e8f4fd; }
.stream, .road, .minor, .minor2, .border, .lift, .dash { fill: none; }
.stream { stroke: #b2d5f0; stroke-width: 1px; }
.stream.wide { stroke-width: 2px; }
.stream.wider { stroke: #93c1e8; stroke-width: 4px; }
.stream.river-w { stroke: #a8cfee; stroke-width: 7px; }
.road { stroke: #f1f8fe; stroke-width: 1px; }
.road.main { stroke: #fff; stroke-width: 2px; }
.minor { stroke: #e6f3fd; stroke-width: 1px; }
.minor2 { stroke: #dcedfa; stroke-width: 3px; }
.border { stroke: #3a80c6; stroke-width: 2px; }
.dash { stroke: #86b6e2; stroke-width: 1px; stroke-dasharray: 4 3; }
.lift { stroke: #5d9bd8; stroke-width: 1px; }
.dashes { stroke-dasharray: 7 2; }
.places text { font-size: 8px; text-anchor: middle; fill: #3c6795; }
.places .town { font-size: 9px; }
.places .river { font-size: 7px; fill: #7aaedd; }
.google { font-size: 13px; fill: #fff; opacity: .7; }
.legal { font-size: 7px; fill: #5a6670; }
.names text { font-size: 12px; text-anchor: middle; fill: #2e64a3; stroke: #d9ecfa; stroke-width: 2px; paint-order: stroke; }
.names .it { font-style: italic; }
.names .capital { font-size: 13px; font-weight: 700; }
.names .land-name { fill: #5d9bd8; font-size: 11px; }
.names .lift-name { font-size: 9px; fill: #34485e; }
.ghost { font-size: 17px; fill: #a3b4c3; }
.ghost.sm { font-size: 13px; }
.legal-d { font-size: 10px; fill: #444; }

.map-find { position: absolute; top: 0; right: 7px; width: 30px; height: 31px; display: grid; place-items: center; background: #fff; box-shadow: 0 1px 2px rgba(0, 0, 0, .3); }
.zoom { position: absolute; left: 9px; bottom: 27px; width: 20px; display: grid; background: #fff; color: #555; font-size: 16px; font-weight: 700; }
.zoom button { height: 20px; line-height: 20px; }

/* headings and tags */
.heading { display: flex; flex-direction: column; align-items: center; gap: 41px; padding: 4px 0 0 4px; }
.rule-v { width: 6px; height: 75px; background: #323232; }
.rule-h { width: 75px; height: 6px; background: #323232; }
.heading h1 { margin-right: 6px; writing-mode: vertical-rl; transform: rotate(180deg); font: 700 94px/94px "Roboto Condensed", "Liberation Sans Narrow", Roboto, sans-serif; }
.tag { display: flex; font: 700 38px/38px "Roboto Condensed", "Liberation Sans Narrow", Roboto, sans-serif; color: #000; white-space: nowrap; }
.tag-desktop { justify-content: flex-end; align-items: flex-end; gap: 11px; padding: 4px 35px 0 0; line-height: 24px; }
.tag-desktop .rule-v { height: 98px; }
.tag-mobile { flex: none; align-items: center; gap: 12px; width: 368px; padding: 0 0 44px 8px; }

.fonts { padding-left: 346px; }
.script { font-size: 75px; line-height: 51px; }
.script-blue { padding: 22px 0 0 73px; color: #7aaedd; }
.script-dark { padding-left: 239px; }
.plain { margin-top: 11px; font-size: 44px; line-height: 40px; }

/* palette */
.bottom { flex: 1; display: flex; align-items: flex-end; }
.palette { flex: 1; min-width: 0; padding-bottom: 1px; }
.codes { display: grid; grid-template-columns: minmax(0, 178fr) minmax(0, 172fr) minmax(0, 212fr) minmax(0, 163fr) minmax(0, 202fr) minmax(0, 149fr); padding: 0 0 8px 81px; }
.codes span { justify-self: start; font-size: 43px; line-height: 40px; transform: rotate(-45deg); transform-origin: 0 100%; }
.swatches { display: grid; grid-template-columns: 195fr 194fr 193fr 192fr 192fr 191fr; height: 37px; }
.c1, .c2 { margin-right: 2px; }
.c1 { background: #77787b; }
.c2 { background: #3d3d3d; }
.c3 { background: #323232; }
.c4 { background: #f9fafc; }
.c5 { background: #fff; }
.c6 { background: #7aaedd; }
```
